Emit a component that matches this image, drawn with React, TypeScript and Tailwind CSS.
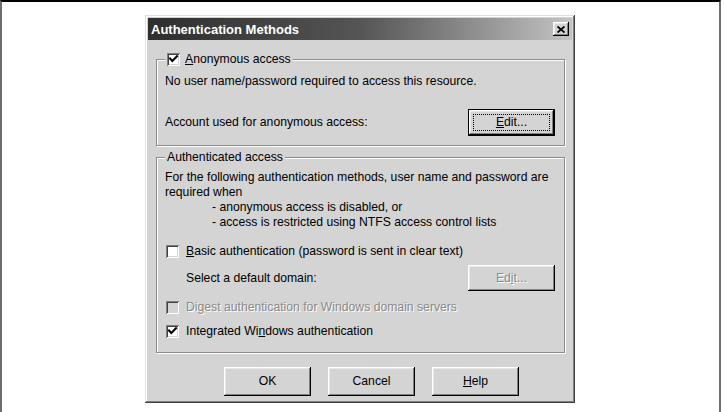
import type { ReactNode } from 'react';

// Classic Win2000 style controls, drawn in grayscale
const FONT = "font-['Liberation_Sans',Arial,sans-serif]";
const RAISED =
  'shadow-[inset_-1px_-1px_0_#000,inset_1px_1px_0_#fff,inset_-2px_-2px_0_#808080,inset_2px_2px_0_#e8e8e8]';

function CheckBox({ checked, disabled }: { checked?: boolean; disabled?: boolean }) {
  return (
    <span
      className={`flex h-[13px] w-[13px] shrink-0 items-center justify-center ${
        disabled ? 'bg-[#d4d4d4]' : 'bg-white'
      } shadow-[inset_1px_1px_0_#808080,inset_-1px_-1px_0_#fff,inset_2px_2px_0_#404040,inset_-2px_-2px_0_#d4d4d4]`}
    >
      {checked && (
        <svg viewBox="0 0 13 13" className="h-[13px] w-[13px]">
          <path d="M3 5.5 L5.3 8 L10 3.2" fill="none" stroke="#000" strokeWidth="2" strokeLinecap="square" />
        </svg>
      )}
    </span>
  );
}

function Btn({ children, def, disabled, className = '' }: { children: ReactNode; def?: boolean; disabled?: boolean; className?: string }) {
  return (
    <div
      className={`flex items-center justify-center bg-[#d4d4d4] ${def ? 'border border-black' : ''} ${className}`}
    >
      <div className={`relative flex h-full w-full items-center justify-center ${RAISED}`}>
        {def && <span className="absolute inset-[4px] border border-dotted border-black" />}
        <span
          className={
            disabled ? 'text-[#8a8a8a] [text-shadow:1px_1px_0_#fff]' : 'text-black'
          }
        >
          {children}
        </span>
      </div>
    </div>
  );
}

function Group({ legend, className = '', children }: { legend: ReactNode; className?: string; children: ReactNode }) {
  return (
    <div className={`relative border border-[#8c8c8c] shadow-[1px_1px_0_#fff,inset_1px_1px_0_#fff] ${className}`}>
      <div className="absolute left-[8px] top-[-9px] flex h-[17px] items-center gap-[5px] bg-[#d4d4d4] px-[2px]">
        {legend}
      </div>
      {children}
    </div>
  );
}

export default function App() {
  return (
    <div className={`h-[412px] w-[721px] border-t-2 border-l-2 border-r-2 border-t-black border-l-[#6e6e6e] border-r-[#6e6e6e] bg-white ${FONT} whitespace-nowrap text-[12.2px] leading-[15px] text-black`}>
      {/* dialog window */}
      <div className="ml-[143px] mt-[13px] flex h-[388px] w-[430px] flex-col bg-[#d4d4d4] p-[3px] shadow-[inset_-1px_-1px_0_#404040,inset_1px_1px_0_#e0e0e0,inset_-2px_-2px_0_#808080,inset_2px_2px_0_#fff]">
        {/* title bar */}
        <div className="flex h-[22px] items-center justify-between bg-gradient-to-r from-[#2e2e2e] via-[#555] to-[#c4c4c4] pl-[3px] pr-[3px]">
          <span className="text-[13px] font-bold text-white">Authentication Methods</span>
          <div className={`flex h-[14px] w-[16px] items-center justify-center bg-[#d4d4d4] ${RAISED}`}>
            <svg viewBox="0 0 8 7" className="h-[7px] w-[8px]">
              <path d="M0.5 0.5 L7.5 6.5 M7.5 0.5 L0.5 6.5" stroke="#000" strokeWidth="1.8" />
            </svg>
          </div>
        </div>

        <div className="flex flex-col px-[8px]">
          {/* anonymous access */}
          <Group
            className="mt-[19px] h-[87px] w-[409px]"
            legend={
              <>
                <CheckBox checked />
                <span>
                  <u>A</u>nonymous access
                </span>
              </>
            }
          >
            <div className="flex flex-col pl-[8px] pr-[9px] pt-[14px]">
              <p>No user name/password required to access this resource.</p>
              <div className="mt-[20px] flex h-[27px] items-center justify-between">
                <span>Account used for anonymous access:</span>
                <Btn def className="h-[27px] w-[87px]">
                  <u>E</u>dit...
                </Btn>
              </div>
            </div>
          </Group>

          {/* authenticated access */}
          <Group
            className="mt-[11px] h-[196px] w-[409px]"
            legend={<span>Authenticated access</span>}
          >
            <div className="flex flex-col pl-[8px] pr-[9px] pt-[12px]">
              <p>For the following authentication methods, user name and password are</p>
              <p>required when</p>
              <p className="pl-[47px]">- anonymous access is disabled, or</p>
              <p className="pl-[47px]">- access is restricted using NTFS access control lists</p>

              <div className="mt-[14px] flex h-[15px] items-center gap-[7px] pl-[1px]">
                <CheckBox />
                <span>
                  <u>B</u>asic authentication (password is sent in clear text)
                </span>
              </div>

              <div className="mt-[6px] flex h-[26px] items-center justify-between pl-[21px]">
                <span>Select a default domain:</span>
                <Btn disabled className="h-[26px] w-[87px]">
                  Ed<u>i</u>t...
                </Btn>
              </div>

              <div className="mt-[9px] flex h-[15px] items-center gap-[7px] pl-[1px]">
                <CheckBox disabled />
                <span className="text-[#8a8a8a] [text-shadow:1px_1px_0_#fff]">
                  Di<u>g</u>est authentication for Windows domain servers
                </span>
              </div>

              <div className="mt-[9px] flex h-[15px] items-center gap-[7px] pl-[1px]">
                <CheckBox checked />
                <span>
                  Integrated Wi<u>n</u>dows authentication
                </span>
              </div>
            </div>
          </Group>
        </div>

        {/* dialog buttons */}
        <div className="mt-[14px] flex gap-[17px] pl-[76px]">
          <Btn className="h-[29px] w-[87px]">OK</Btn>
          <Btn className="h-[29px] w-[87px]">Cancel</Btn>
          <Btn className="h-[29px] w-[87px]">
            <u>H</u>elp
          </Btn>
        </div>
      </div>
    </div>
  );
}
